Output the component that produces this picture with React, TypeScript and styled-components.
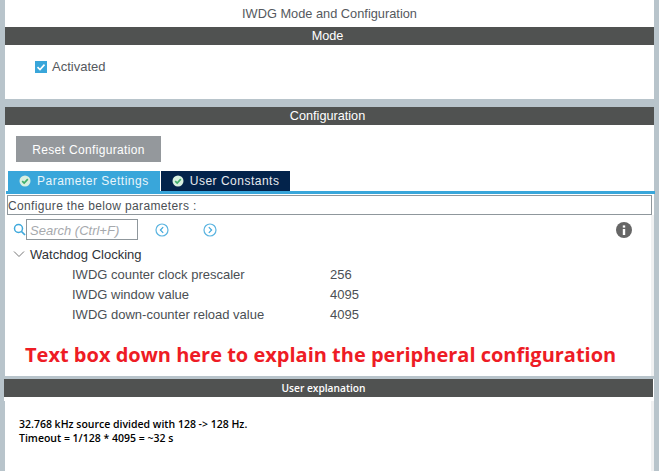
import styled, { createGlobalStyle } from "styled-components";

const GlobalStyle = createGlobalStyle`
  html, body {
    margin: 0;
    padding: 0;
    background: #b8c4cb;
  }
`;

const params = [
  { label: "IWDG counter clock prescaler", value: "256" },
  { label: "IWDG window value", value: "4095" },
  { label: "IWDG down-counter reload value", value: "4095" },
];

const CheckBadge = () => (
  <BadgeSvg viewBox="0 0 12 12">
    <circle cx="6" cy="6" r="5.5" fill="#d8efe0" />
    <path d="M3.2 6.1 5.2 8 8.8 4.2" fill="none" stroke="#3fae6a" strokeWidth="1.7" />
  </BadgeSvg>
);

const NavButton = ({ right }: { right?: boolean }) => (
  <svg width="14" height="14" viewBox="0 0 14 14">
    <circle cx="7" cy="7" r="6" fill="none" stroke="#5bb4e0" strokeWidth="1.2" />
    <path
      d={right ? "M5.8 4.2 8.6 7 5.8 9.8" : "M8.2 4.2 5.4 7 8.2 9.8"}
      fill="none"
      stroke="#3fa9dc"
      strokeWidth="1.2"
    />
  </svg>
);

export default function App() {
  return (
    <>
      <GlobalStyle />
      <Page>
        <ModePanel>
          <PageTitle>IWDG Mode and Configuration</PageTitle>
          <SectionBar>Mode</SectionBar>
          <ModeBody>
            <CheckBox>
              <svg width="12" height="12" viewBox="0 0 12 12">
                <path d="M2.5 6.2 5 8.6 9.5 3.6" fill="none" stroke="#fff" strokeWidth="1.6" />
              </svg>
            </CheckBox>
            <CheckLabel>Activated</CheckLabel>
          </ModeBody>
        </ModePanel>

        <ConfigPanel>
          <SectionBar>Configuration</SectionBar>
          <ResetButton>Reset Configuration</ResetButton>
          <Tabs>
            <Tab $active>
              <CheckBadge />
              Parameter Settings
            </Tab>
            <Tab>
              <CheckBadge />
              User Constants
            </Tab>
          </Tabs>
          <TabRule />
          <ConfigureBox>Configure the below parameters :</ConfigureBox>
          <ScrollArea>
            <SearchRow>
              <SearchGroup>
                <svg width="13" height="13" viewBox="0 0 13 13">
                  <circle cx="5.5" cy="5.5" r="4" fill="none" stroke="#3fa9dc" strokeWidth="1.5" />
                  <path d="M8.5 8.5 12 12" stroke="#3fa9dc" strokeWidth="1.7" />
                </svg>
                <SearchBox>Search (Ctrl+F)</SearchBox>
              </SearchGroup>
              <NavGroup>
                <NavButton />
                <NavButton right />
              </NavGroup>
              <InfoIcon viewBox="0 0 16 16">
                <circle cx="8" cy="8" r="8" fill="#666" />
                <rect x="6.8" y="7" width="2.4" height="6" fill="#fff" />
                <rect x="6.8" y="3.4" width="2.4" height="2.2" fill="#fff" />
              </InfoIcon>
            </SearchRow>
            <GroupRow>
              <svg width="12" height="8" viewBox="0 0 12 8">
                <path d="M1 1.5 6 6.5 11 1.5" fill="none" stroke="#777" strokeWidth="1" />
              </svg>
              <GroupTitle>Watchdog Clocking</GroupTitle>
            </GroupRow>
            <ParamList>
              {params.map((p) => (
                <ParamRow key={p.label}>
                  <ParamLabel>{p.label}</ParamLabel>
                  <span>{p.value}</span>
                </ParamRow>
              ))}
            </ParamList>
            <Note>Text box down here to explain the peripheral configuration</Note>
          </ScrollArea>
        </ConfigPanel>

        <ExplainPanel>
          <ExplainBar>User explanation</ExplainBar>
          <ExplainBody>
            32.768 kHz source divided with 128 -&gt; 128 Hz.
            <br />
            Timeout = 1/128 * 4095 = ~32 s
          </ExplainBody>
        </ExplainPanel>
      </Page>
    </>
  );
}

const Page = styled.div`
  width: 659px;
  height: 471px;
  overflow: hidden;
  padding: 0 5px;
  box-sizing: border-box;
  font-family: "Liberation Sans", Arial, sans-serif;
  font-size: 13px;
  color: #4b4f54;
`;

const ModePanel = styled.div`
  height: 99px;
  background: #fff;
  margin-bottom: 8px;
`;

const PageTitle = styled.div`
  height: 27px;
  line-height: 28px;
  text-align: center;
  font-size: 12.8px;
  color: #55595e;
`;

const SectionBar = styled.div`
  height: 18px;
  line-height: 19px;
  padding-right: 4px;
  background: #505251;
  color: #fff;
  text-align: center;
  font-size: 12.7px;
`;

const ModeBody = styled.div`
  display: flex;
  align-items: center;
  gap: 5px;
  padding: 14px 0 0 30px;
`;

const CheckBox = styled.span`
  display: flex;
  width: 12px;
  height: 12px;
  background: #39a6da;
`;

const CheckLabel = styled.span`
  font-size: 13px;
  color: #55595e;
`;

const ConfigPanel = styled.div`
  height: 269px;
  background: #fff;
  margin-bottom: 3px;
  display: flex;
  flex-direction: column;
`;

const ResetButton = styled.div`
  width: 145px;
  height: 26px;
  margin: 11px 0 0 11px;
  background: #94989c;
  color: #fff;
  font-size: 12px;
  letter-spacing: 0.35px;
  line-height: 28px;
  text-align: center;
`;

const Tabs = styled.div`
  display: flex;
  gap: 1px;
  margin: 9px 0 0 3px;
`;

const Tab = styled.div<{ $active?: boolean }>`
  display: flex;
  align-items: center;
  gap: 6px;
  height: 20px;
  padding: 0 11px 0 11px;
  background: ${(props) => (props.$active ? "#39a6da" : "#03234b")};
  color: ${(props) => (props.$active ? "#e8f5fb" : "#e6e9ee")};
  font-size: 12px;
  letter-spacing: 0.5px;
`;

const BadgeSvg = styled.svg`
  width: 12px;
  height: 12px;
  flex: none;
`;

const TabRule = styled.div`
  height: 3px;
  flex: none;
  background: #39a6da;
  margin-left: 1px;
  margin-right: -1px;
`;

const ConfigureBox = styled.div`
  height: 18px;
  flex: none;
  line-height: 20px;
  margin: 1px 2px 0 2px;
  border: 1px solid #8f979c;
  font-size: 12px;
  letter-spacing: 0.35px;
  color: #4b4f54;
`;

const ScrollArea = styled.div`
  flex: 1;
  border-right: 3px solid #f0f1f2;
`;

const SearchRow = styled.div`
  display: flex;
  align-items: center;
  height: 23px;
  margin-top: 3px;
  padding-left: 8px;
`;

const SearchGroup = styled.div`
  display: flex;
  align-items: center;
`;

const SearchBox = styled.div`
  width: 112px;
  height: 21px;
  line-height: 21px;
  padding-left: 3px;
  box-sizing: border-box;
  border: 1px solid #8f979c;
  font-style: italic;
  color: #a6a9ad;
  font-size: 13px;
`;

const NavGroup = styled.div`
  display: flex;
  gap: 34px;
  margin-left: 17px;
`;

const InfoIcon = styled.svg`
  width: 16px;
  height: 16px;
  margin-left: auto;
  margin-right: 19px;
`;

const GroupRow = styled.div`
  display: flex;
  align-items: center;
  gap: 5px;
  height: 20px;
  margin-top: 3px;
  padding-left: 8px;
`;

const GroupTitle = styled.span`
  color: #2f3338;
  font-size: 13px;
`;

const ParamList = styled.div`
  display: flex;
  flex-direction: column;
  padding-left: 67px;
`;

const ParamRow = styled.div`
  display: flex;
  height: 20px;
  align-items: center;
  font-size: 13px;
  color: #4b4f54;
`;

const ParamLabel = styled.span`
  width: 258px;
`;

const Note = styled.div`
  margin: 17px 0 0 20px;
  font-family: "Open Sans", sans-serif;
  font-weight: 700;
  font-size: 20px;
  line-height: 28px;
  color: #ee1c25;
  white-space: nowrap;
`;

const ExplainPanel = styled.div`
  background: #fff;
  height: 92px;
`;

const ExplainBar = styled(SectionBar)`
  margin: 0 1px 0 -1px;
  padding-right: 10px;
  border-bottom: 4px solid #fff;
  font-family: "Open Sans", sans-serif;
  font-weight: 600;
  font-size: 10.2px;
`;

const ExplainBody = styled.div`
  height: 70px;
  padding: 16px 0 0 14px;
  box-sizing: border-box;
  border-right: 3px solid #f0f1f2;
  font-family: "Open Sans", sans-serif;
  font-weight: 600;
  font-size: 10.5px;
  line-height: 14px;
  color: #000;
`;
